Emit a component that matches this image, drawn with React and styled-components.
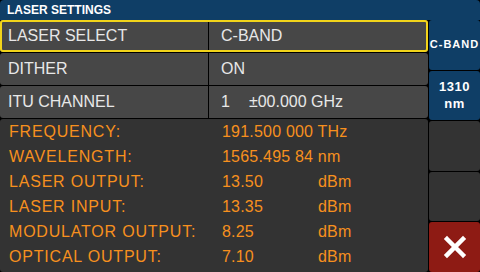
import React from "react";
import styled, { createGlobalStyle } from "styled-components";

const Global = createGlobalStyle`
  html, body { margin: 0; padding: 0; background: #000; }
  body { font-family: "Liberation Sans", Arial, sans-serif; }
`;

const Screen = styled.div`
  width: 480px;
  height: 272px;
  background: #000;
  display: flex;
  flex-direction: column;
  overflow: hidden;
`;

const Header = styled.div`
  height: 20px;
  flex: none;
  background: #0f3e66;
  border-radius: 4px 4px 0 0;
  color: #fff;
  font-weight: bold;
  font-size: 12px;
  display: flex;
  align-items: center;
  padding-left: 7px;
  box-sizing: border-box;
`;

const Body = styled.div`
  flex: 1;
  display: grid;
  grid-template-columns: 428px 51px;
  column-gap: 1px;
  min-height: 0;
`;

const Main = styled.div`
  display: flex;
  flex-direction: column;
  gap: 1px;
`;

const Row = styled.div`
  height: 32px;
  flex: none;
  display: grid;
  grid-template-columns: 208px 1fr;
  column-gap: 1px;
  border-radius: 3px;
  box-sizing: border-box;
  outline: ${(p) => (p.$active ? "2px solid #f2d41a" : "none")};
  outline-offset: -2px;
`;

const Cell = styled.div`
  background: #474747;
  color: #e8e8e8;
  font-size: 16px;
  display: flex;
  align-items: center;
  padding-left: ${(p) => (p.$value ? "12px" : "8px")};
  border-radius: ${(p) => (p.$value ? "0 3px 3px 0" : "3px 0 0 3px")};
  white-space: pre;
`;

const Spacer = styled.span`
  display: inline-block;
  width: 19px;
`;

const Data = styled.div`
  flex: 1;
  background: #333;
  border-radius: 3px;
  display: grid;
  grid-template-columns: 213px 96px 1fr;
  grid-auto-rows: 25px;
  align-content: start;
  padding-left: 9px;
  color: #f7901e;
  font-size: 16px;
  line-height: 25px;
`;

const Label = styled.span`
  letter-spacing: 0.8px;
`;

const Value = styled.span`
  letter-spacing: 0.2px;
  grid-column: ${(p) => (p.$wide ? "span 2" : "auto")};
`;

const Side = styled.div`
  display: grid;
  grid-template-rows: repeat(5, 1fr);
  row-gap: 1px;
`;

const SideButton = styled.div`
  background: ${(p) => (p.$tone === "blue" ? "#0f3e66" : p.$tone === "red" ? "#8e1b14" : "#333")};
  border-radius: 3px;
  color: #fff;
  font-weight: bold;
  font-size: ${(p) => (p.$small ? "11px" : "13px")};
  letter-spacing: ${(p) => (p.$small ? "1px" : "0.5px")};
  line-height: 17px;
  text-align: center;
  display: flex;
  align-items: center;
  justify-content: center;
`;

const rows = [
  { label: "LASER SELECT", value: "C-BAND", active: true },
  { label: "DITHER", value: "ON" },
  {
    label: "ITU CHANNEL",
    value: (
      <>
        1<Spacer />±00.000 GHz
      </>
    ),
  },
];

const data = [
  ["FREQUENCY:", "191.500 000 THz", ""],
  ["WAVELENGTH:", "1565.495 84 nm", ""],
  ["LASER OUTPUT:", "13.50", "dBm"],
  ["LASER INPUT:", "13.35", "dBm"],
  ["MODULATOR OUTPUT:", "8.25", "dBm"],
  ["OPTICAL OUTPUT:", "7.10", "dBm"],
];

const CloseIcon = () => (
  <svg width="24" height="24" viewBox="0 0 24 24">
    <path d="M4 4 L20 20 M20 4 L4 20" stroke="#fff" strokeWidth="4.5" strokeLinecap="square" />
  </svg>
);

export default function App() {
  return (
    <Screen>
      <Global />
      <Header>LASER SETTINGS</Header>
      <Body>
        <Main>
          {rows.map((r) => (
            <Row key={r.label} $active={r.active}>
              <Cell>{r.label}</Cell>
              <Cell $value>{r.value}</Cell>
            </Row>
          ))}
          <Data>
            {data.map(([l, v, u]) => (
              <React.Fragment key={l}>
                <Label>{l}</Label>
                <Value $wide={!u}>{v}</Value>
                {u && <Value>{u}</Value>}
              </React.Fragment>
            ))}
          </Data>
        </Main>
        <Side>
          <SideButton $tone="blue" $small>C-BAND</SideButton>
          <SideButton $tone="blue">
            1310
            <br />
            nm
          </SideButton>
          <SideButton />
          <SideButton />
          <SideButton $tone="red">
            <CloseIcon />
          </SideButton>
        </Side>
      </Body>
    </Screen>
  );
}
